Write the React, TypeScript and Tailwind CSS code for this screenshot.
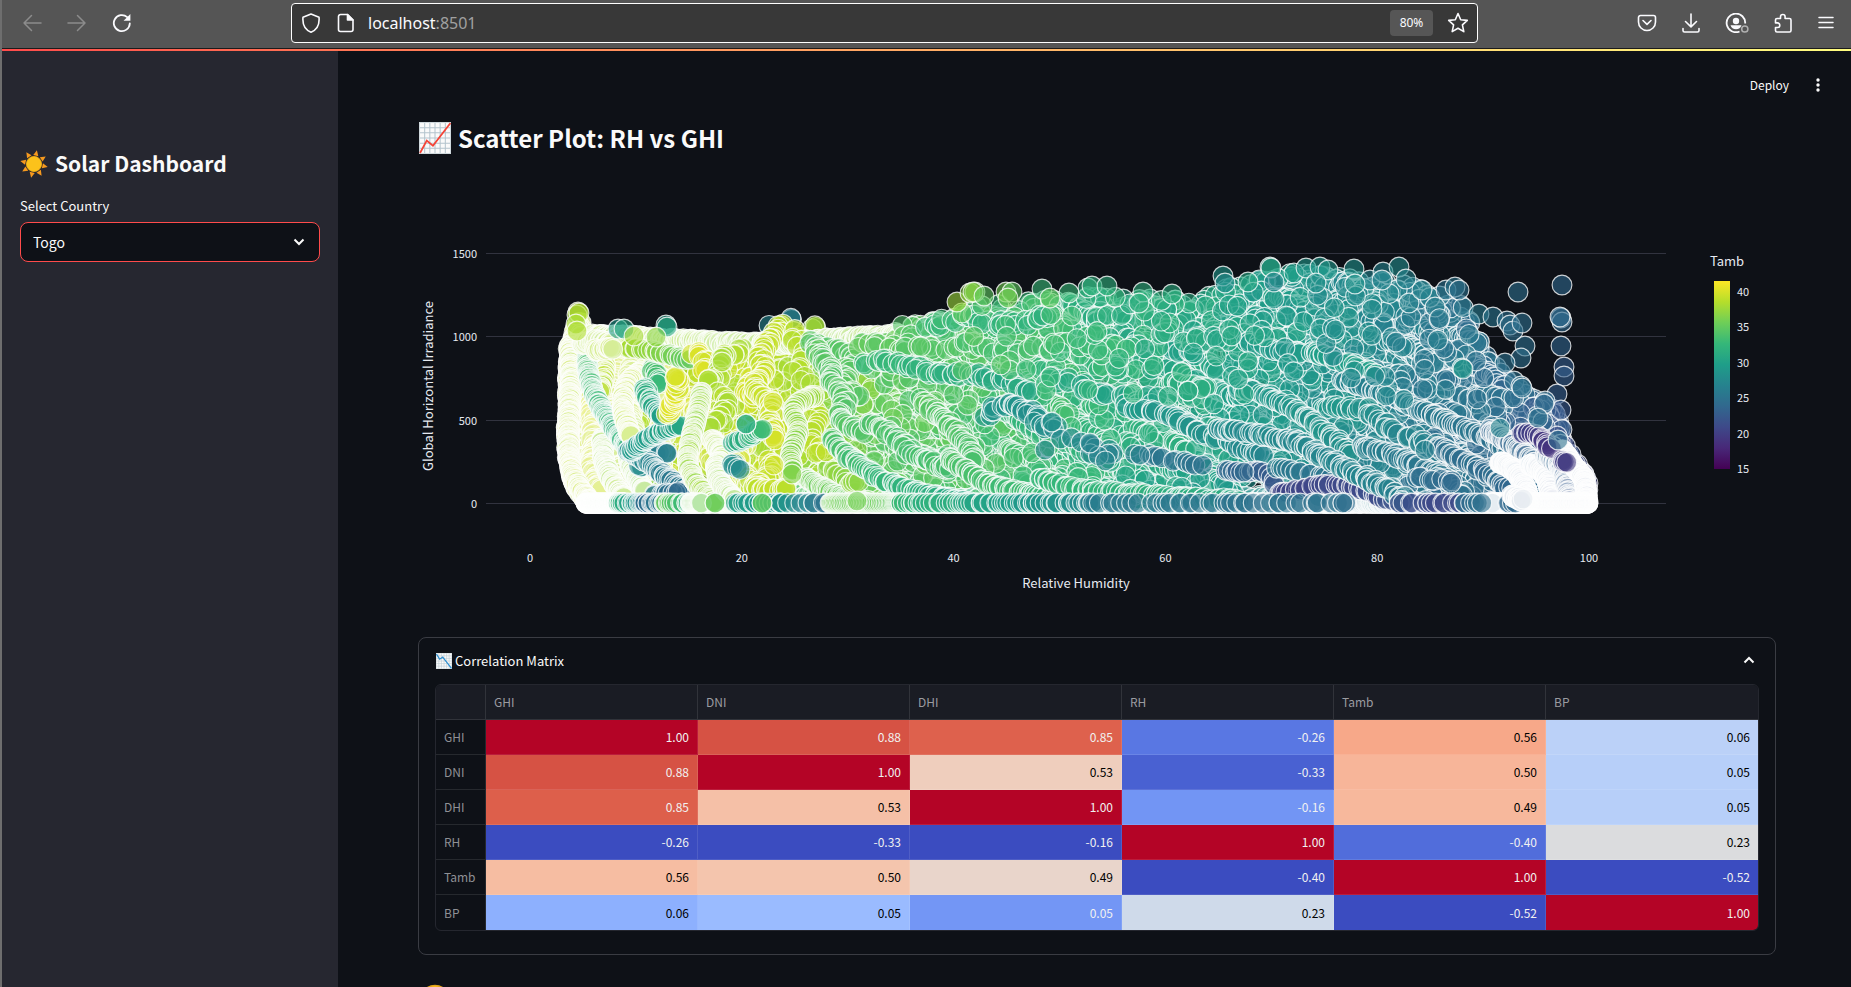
import React from "react";

type Point = [number, number];
type Dot = { x: number; y: number; t: number; pale?: number };

const VIRIDIS = [
  [68, 1, 84],
  [72, 40, 120],
  [62, 73, 137],
  [49, 104, 142],
  [38, 130, 142],
  [31, 158, 137],
  [53, 183, 121],
  [110, 206, 88],
  [181, 222, 43],
  [253, 231, 37],
];

function viridis(t: number, pale = 0): string {
  const p = Math.min(0.9999, Math.max(0, (t - 15) / 26.6)) * 9;
  const i = Math.floor(p);
  const f = p - i;
  const c = VIRIDIS[i].map((v, k) => {
    const base = v + (VIRIDIS[i + 1][k] - v) * f;
    return Math.round(base + (255 - base) * pale);
  });
  return `rgb(${c[0]},${c[1]},${c[2]})`;
}

function seeded(seed: number) {
  let s = seed;
  return () => {
    s = (s + 0x6d2b79f5) | 0;
    let r = Math.imul(s ^ (s >>> 15), 1 | s);
    r = (r + Math.imul(r ^ (r >>> 7), 61 | r)) ^ r;
    return ((r ^ (r >>> 14)) >>> 0) / 4294967296;
  };
}

function lerp(table: Point[], x: number): number {
  for (let i = 1; i < table.length; i++) {
    if (x <= table[i][0]) {
      const [x0, y0] = table[i - 1];
      const [x1, y1] = table[i];
      return y0 + ((y1 - y0) * (x - x0)) / (x1 - x0);
    }
  }
  return table[table.length - 1][1];
}

const CEILING: Point[] = [
  [567, 350], [575, 335], [600, 333], [640, 335], [700, 340], [740, 345], [762, 340], [780, 330], [800, 334],
  [830, 337], [880, 336], [900, 330], [930, 318], [960, 312], [975, 304], [1000, 304], [1040, 300], [1090, 296],
  [1140, 294], [1190, 302], [1220, 288], [1250, 284], [1270, 272], [1320, 272], [1360, 280], [1400, 282],
  [1440, 296], [1460, 304], [1475, 320], [1488, 356], [1500, 370], [1520, 390], [1545, 402], [1558, 415],
  [1565, 440], [1575, 458], [1588, 480],
];

const WARMTH: Point[] = [
  [567, 38.8], [780, 39], [830, 37], [880, 35], [960, 34.4], [1050, 33], [1150, 31.6], [1250, 30.2], [1320, 28.6],
  [1400, 26.6], [1480, 24.8], [1540, 23.5], [1590, 21.5],
];

/* points, step between dots, start and end temperature, jitter */
type Trail = [Point[], number, number, number, number];

const UNDER: Trail[] = [
  [[[767, 325], [769, 327]], 2, 27.5, 27.5, 1],
  [[[790, 320], [793, 317]], 2, 26.5, 27, 1],
  [[[812, 328], [818, 325]], 2, 37.6, 38, 1],
  [[[580, 322], [574, 340], [570, 360], [569, 400], [568, 440], [570, 460], [576, 485], [588, 502]], 0.7, 39, 39, 2.5],
  [[[582, 335], [580, 360], [582, 400], [584, 440], [586, 480], [596, 500]], 0.6, 38, 40, 6],
  [[[600, 345], [602, 400], [600, 450], [606, 490]], 0.6, 39, 38, 5],
  [[[617, 345], [613, 400], [618, 450], [625, 490]], 0.6, 40, 38, 6],
  [[[640, 350], [628, 400], [635, 450], [648, 498]], 0.6, 39, 38, 6],
  [[[660, 370], [665, 420], [655, 460], [670, 495]], 0.8, 40, 38, 8],
  [[[590, 336], [640, 338], [700, 342], [760, 344], [830, 340], [900, 336]], 0.7, 38, 37, 3],
  [[[590, 495], [680, 492], [760, 495], [880, 500], [1100, 500], [1330, 500]], 0.9, 38, 27, 5],
  [[[588, 503], [900, 503], [1250, 503], [1588, 503]], 0.6, 38, 23, 0.5],
  [[[690, 400], [710, 440], [715, 470]], 1, 40, 39, 8],
  [[[745, 440], [735, 465], [760, 490]], 1, 40, 39, 8],
];

const TRAILS: Trail[] = [
  [[[591, 395], [594, 430], [592, 465], [600, 492]], 0.8, 40, 39.4, 4],
  [[[570, 345], [571, 380], [569, 420], [569, 450], [573, 476], [590, 502]], 0.7, 38.6, 39, 1.2],
  [[[601, 348], [605, 370], [600, 392]], 1, 39, 38.5, 1.6],
  [[[602, 438], [604, 460], [612, 480], [624, 498]], 0.7, 37, 38, 1.2],
  [[[588, 345], [588, 372], [597, 400], [611, 424], [628, 448]], 1.2, 34, 32, 1.2],
  [[[640, 372], [627, 385], [623, 410], [630, 435]], 0.8, 39, 38.5, 1.2],
  [[[628, 452], [632, 470], [645, 492]], 0.7, 37, 37, 1.2],
  [[[640, 468], [650, 455], [670, 452]], 2.4, 28, 26, 2],
  [[[628, 450], [648, 462], [664, 475], [690, 492]], 1.6, 28, 25, 1.2],
  [[[655, 495], [680, 492]], 2.4, 26, 24, 1],
  [[[631, 451], [650, 437], [680, 425]], 1.6, 29, 31, 0.8],
  [[[652, 368], [660, 385]], 1.8, 34, 33, 1],
  [[[645, 388], [651, 405], [662, 416]], 1.6, 32, 30, 1],
  [[[668, 415], [674, 402], [678, 388], [675, 375]], 1.8, 40.2, 40.2, 1.5],
  [[[618, 347], [640, 349], [665, 354], [690, 360]], 2.6, 38.6, 35, 1],
  [[[582, 344], [598, 340], [612, 344]], 0.8, 38, 38, 1.5],
  [[[595, 350], [612, 348]], 0.8, 38.4, 38.4, 2],
  [[[695, 352], [706, 362], [700, 372]], 2.2, 40, 40, 3],
  [[[740, 350], [724, 358], [720, 375], [705, 382]], 2, 38.4, 38, 3],
  [[[722, 395], [725, 415], [708, 425]], 2.4, 38.4, 38, 4],
  [[[702, 392], [696, 420], [691, 440], [688, 460], [694, 480], [714, 503]], 1.1, 37.5, 37.5, 1],
  [[[712, 440], [722, 456], [716, 468], [722, 485], [735, 500]], 0.8, 38, 37, 1.2],
  [[[756, 375], [745, 390], [758, 398]], 2.4, 40, 39.6, 3],
  [[[782, 324], [772, 340], [760, 355], [763, 370], [756, 388], [772, 405], [770, 425], [776, 440]], 1.7, 39, 39.7, 2.5],
  [[[790, 330], [800, 350], [796, 370], [812, 385]], 4, 38.8, 38.5, 4],
  [[[808, 395], [815, 415], [812, 440], [822, 455]], 3, 38.6, 39, 4],
  [[[733, 443], [748, 437], [763, 428]], 1.8, 31, 33, 1],
  [[[733, 463], [739, 471]], 2.2, 28, 28, 1],
  [[[770, 462], [772, 475], [755, 488], [790, 490]], 2, 39.4, 39, 3],
  [[[815, 396], [800, 402], [793, 412], [798, 430], [791, 455], [793, 472]], 1.5, 37.6, 36.5, 1],
  [[[806, 478], [820, 486], [840, 496], [868, 503]], 1.4, 36, 35, 1],
  [[[850, 483], [862, 481]], 3, 37.5, 37, 1],
  [[[900, 330], [920, 345], [960, 345], [1010, 350], [1060, 346], [1130, 348]], 5, 34.5, 33, 6],
  [[[812, 342], [835, 350], [850, 360], [845, 385], [860, 398]], 2.4, 34.6, 34.6, 4],
  [[[812, 345], [825, 362], [834, 385], [845, 400], [842, 420], [862, 432]], 1.7, 34.6, 34.2, 3],
  [[[860, 345], [880, 345], [900, 352], [920, 345]], 4, 35, 34.6, 4],
  [[[868, 365], [885, 360], [905, 366], [930, 372], [975, 375], [1010, 382], [1030, 396]], 3.4, 33, 30.6, 4],
  [[[930, 325], [965, 318], [1010, 324], [1050, 318]], 4, 33, 32, 6],
  [[[870, 425], [895, 440], [915, 455], [950, 470]], 2, 34, 33.6, 4],
  [[[833, 438], [842, 452], [860, 465], [880, 478], [910, 490], [950, 499], [985, 503], [1060, 503]], 2, 34, 29, 1.5],
  [[[922, 402], [940, 415], [955, 430], [966, 445], [975, 462]], 1.8, 34.6, 34, 2],
  [[[948, 458], [965, 468], [985, 482], [1020, 492], [1070, 499], [1140, 500]], 1.9, 34, 32, 1.5],
  [[[1040, 478], [1075, 488], [1110, 492], [1190, 498], [1240, 500]], 2.4, 33, 31, 2],
  [[[985, 414], [1005, 406], [1030, 412], [1042, 430]], 2.4, 29, 28, 4],
  [[[1050, 424], [1070, 440], [1090, 443], [1102, 450], [1118, 452]], 6, 28, 26.5, 4],
  [[[1090, 455], [1104, 462]], 5, 27, 27, 2],
  [[[1050, 380], [1090, 386], [1120, 398], [1160, 400]], 4, 31, 30, 6],
  [[[1130, 408], [1170, 415], [1200, 432], [1220, 440]], 3, 29.4, 28.4, 1.5],
  [[[1225, 436], [1240, 448], [1262, 455]], 2.6, 28, 27.4, 1.5],
  [[[1140, 455], [1160, 457], [1180, 462], [1205, 467]], 5.5, 25.6, 25, 1.5],
  [[[1222, 471], [1245, 472], [1262, 472], [1276, 486]], 4, 24, 22, 1],
  [[[1277, 468], [1300, 472], [1330, 478]], 4, 26, 25, 1],
  [[[1276, 493], [1298, 490], [1320, 485], [1350, 486], [1368, 492], [1392, 502]], 3.4, 20.4, 21.4, 1],
  [[[1160, 330], [1200, 345], [1240, 330], [1290, 340]], 6, 31.4, 30, 10],
  [[[1250, 342], [1280, 350], [1310, 352], [1345, 362], [1380, 376]], 3, 29.4, 30, 3],
  [[[1235, 388], [1270, 396], [1300, 412], [1325, 432], [1352, 455]], 2.2, 29.6, 28, 2.5],
  [[[1220, 430], [1290, 440], [1340, 465], [1380, 485], [1405, 500]], 2, 28, 26.5, 3],
  [[[1345, 382], [1380, 392], [1410, 405], [1440, 418], [1470, 430], [1500, 445], [1525, 470], [1545, 498]], 2.1, 27, 24, 1.5],
  [[[1330, 408], [1370, 412], [1390, 428], [1430, 445], [1460, 460]], 3, 29, 26, 4],
  [[[1360, 446], [1400, 458], [1440, 476], [1465, 495]], 2.2, 26.6, 25, 2],
  [[[1440, 447], [1480, 470], [1510, 490]], 2.4, 25, 24, 2],
  [[[1415, 478], [1455, 482]], 4, 25, 24, 2],
  [[[1490, 430], [1520, 450], [1545, 475], [1560, 500]], 0.9, 24, 23, 2],
  [[[1500, 462], [1518, 474], [1530, 502]], 0.5, 24, 22, 1.5],
  [[[1530, 464], [1545, 474], [1552, 500]], 0.5, 24, 22, 1.5],
  [[[1545, 455], [1562, 470], [1570, 502]], 0.8, 24, 22, 1.5],
  [[[1562, 450], [1574, 466], [1584, 480], [1587, 502]], 0.5, 24, 22, 1],
  [[[1523, 434], [1535, 434], [1545, 443], [1552, 450]], 2.4, 20, 19, 0.8],
  [[[1562, 461], [1568, 463]], 1.6, 20, 19, 0.8],
  [[[586, 503], [625, 503]], 0.45, 36, 34, 0],
  [[[618, 503], [640, 503], [645, 503]], 1.6, 33, 27, 0],
  [[[645, 503], [664, 503]], 1.6, 24, 26, 0],
  [[[664, 503], [690, 503]], 1.8, 36, 32, 0],
  [[[690, 503], [702, 503]], 0.8, 36, 36, 0],
  [[[736, 503], [780, 503]], 3, 30, 29, 0],
  [[[780, 503], [800, 503], [830, 503]], 5, 29, 25, 0],
  [[[830, 503], [872, 503], [900, 503]], 1.5, 36, 35, 0],
  [[[900, 503], [950, 503], [1040, 503], [1090, 503]], 3, 33, 27.4, 0],
  [[[1088, 503], [1150, 503], [1250, 503], [1350, 503]], 6, 26, 24.6, 0],
  [[[1588, 503], [1520, 503], [1492, 503]], 0.5, 22, 24, 0],
  [[[1400, 503], [1425, 503], [1462, 503]], 4, 21.8, 20.8, 0],
  [[[1464, 503], [1482, 503]], 3, 24.6, 24.6, 0],
  [[[1508, 503], [1516, 503]], 2, 24, 24, 0],
  [[[1512, 496], [1522, 500]], 0.5, 23, 23, 2],
];

const SINGLES: [number, number, number][] = [
  [578, 312, 38.6], [577, 315, 38], [579, 313, 38.4], [576, 324, 38], [577, 331, 38.4], [618, 329, 29], [624, 329, 31],
  [634, 336, 38], [666, 325, 30], [667, 327, 31], [656, 337, 37], [746, 424, 31.6], [746, 424, 31.6], [722, 358, 38],
  [722, 362, 38], [773, 402, 39.8], [774, 465, 39.8], [792, 474, 36.6], [857, 501, 36], [715, 503, 35.4], [715, 503, 35.4],
  [762, 503, 35], [762, 503, 35], [957, 302, 37.6], [970, 293, 37], [975, 292, 36.6], [973, 292, 36.6], [984, 296, 35],
  [1006, 292, 36], [1012, 292, 35], [1008, 298, 36], [1042, 289, 33], [1050, 298, 35], [1069, 293, 33],
  [1088, 288, 32], [1092, 286, 32], [1107, 286, 32], [1143, 292, 32], [1172, 294, 31.6], [1139, 303, 31.8],
  [1223, 276, 29], [1225, 283, 28], [1248, 282, 31], [1270, 267, 30.6], [1271, 268, 30.4], [1294, 273, 29.6],
  [1306, 268, 29], [1320, 267, 29.4], [1328, 270, 29], [1274, 282, 27], [1316, 283, 28.4], [1354, 269, 28.4],
  [1370, 280, 27], [1355, 284, 28.6], [1383, 272, 27], [1382, 280, 27], [1399, 267, 28], [1406, 279, 27], [1409, 303, 27],
  [1422, 290, 27], [1446, 290, 25], [1455, 287, 25.6], [1459, 290, 25], [1479, 314, 26], [1493, 317, 25.4],
  [1507, 321, 24.8], [1510, 325, 24.8], [1513, 331, 24.8], [1522, 323, 24.8], [1525, 346, 24.8], [1521, 358, 24.8],
  [1505, 363, 25], [1518, 292, 24.8], [1562, 285, 24], [1561, 318, 24], [1562, 322, 24], [1560, 317, 24.2],
  [1561, 346, 23.6], [1564, 367, 23], [1564, 376, 23], [1557, 394, 23], [1561, 410, 22.4], [1514, 381, 25],
  [1521, 386, 25], [1522, 388, 25], [1545, 401, 24.6], [1544, 404, 24], [1462, 368, 28.4], [1463, 369, 28.6],
  [1538, 418, 25], [1558, 440, 25], [1500, 428, 27], [1188, 391, 31.2], [1188, 391, 31.2], [1045, 450, 27], [1090, 443, 27],
  [1140, 455, 26], [1244, 472, 24.2], [1425, 450, 26.6], [1351, 378, 27.6], [1052, 422, 28.4],
];

function curve(points: Point[], step: number): Point[] {
  const out: Point[] = [];
  for (let i = 0; i < points.length - 1; i++) {
    const p0 = points[Math.max(0, i - 1)];
    const p1 = points[i];
    const p2 = points[i + 1];
    const p3 = points[Math.min(points.length - 1, i + 2)];
    const n = Math.max(1, Math.round(Math.hypot(p2[0] - p1[0], p2[1] - p1[1]) / step));
    for (let k = 0; k < n; k++) {
      const u = k / n;
      const at = (a: number) =>
        0.5 *
        (2 * p1[a] +
          (p2[a] - p0[a]) * u +
          (2 * p0[a] - 5 * p1[a] + 4 * p2[a] - p3[a]) * u * u +
          (3 * p1[a] - p0[a] - 3 * p2[a] + p3[a]) * u * u * u);
      out.push([at(0), at(1)]);
    }
  }
  return out;
}

function buildDots(): Dot[] {
  const rand = seeded(8501);
  const dots: Dot[] = [];
  const run = ([points, step, t0, t1, jitter]: Trail) => {
    const line = curve(points, step);
    const wobble = step > 1.5 ? step * 1.7 : 0.3;
    /* tightly packed readings wash out towards white */
    const pale = step <= 0.5 ? 0.88 : step <= 0.8 ? 0.5 : step <= 1.2 ? 0.15 : 0;
    line.forEach(([x, y], i) => {
      dots.push({
        x: x + (rand() - 0.5) * (jitter * 1.4 + wobble),
        y: Math.min(503.5, y + (rand() - 0.5) * jitter * 1.6),
        t: t0 + ((t1 - t0) * i) / line.length + (rand() - 0.5) * 0.8,
        pale,
      });
    });
  };
  const fill = (count: number, from: number, to: number) => {
    for (let i = 0; i < count; i++) {
      const x = from + rand() * (to - from);
      const top = lerp(CEILING, x);
      const y = top + rand() * (503 - top);
      if (x < 567 + Math.max(0, y - 450) * 0.42) continue;
      const low = (y - 400) / 100;
      const cool = x > 1100 && low > 0 ? low * 1.2 : 0;
      dots.push({ x, y, t: lerp(WARMTH, x) - cool + (rand() - 0.5) * 2 });
    }
  };
  fill(1100, 567, 830);
  fill(3300, 820, 1588);
  UNDER.forEach(run);
  /* short drifting streaks through the humid half */
  for (let i = 0; i < 170; i++) {
    const x = 830 + rand() * 650;
    const top = lerp(CEILING, x) + 4;
    const y = top + rand() * (480 - top);
    const len = 14 + rand() * 30;
    const dy = (0.1 + rand() * 0.8) * len;
    const t = lerp(WARMTH, x) + (rand() - 0.5) * 1.8;
    const yEnd = Math.min(500, Math.max(y + dy, lerp(CEILING, x + len)));
    run([[[x, y], [x + len / 2, y + (yEnd - y) * 0.4], [x + len, yEnd]], 1.8 + rand() * 3, t, t - 0.8, 2]);
  }
  fill(420, 860, 1500);
  TRAILS.forEach(run);
  for (let i = 0; i < 90; i++) {
    const x = 960 + rand() * 500;
    const top = lerp(CEILING, x);
    const y = top + rand() * (400 - top);
    dots.push({ x, y, t: lerp(WARMTH, x) + (rand() - 0.5) * 1.6 });
  }
  SINGLES.forEach(([x, y, t]) => dots.push({ x, y, t }));
  return dots;
}

const DOTS = buildDots();

const X_TICKS = [0, 20, 40, 60, 80, 100];
const Y_TICKS = [0, 500, 1000, 1500];
const TEMP_TICKS = [15, 20, 25, 30, 35, 40];

function ScatterPlot() {
  return (
    <svg
      viewBox="418 180 1358 430"
      className="block h-auto w-full"
      role="img"
      aria-label="Relative Humidity against Global Horizontal Irradiance"
    >
      <defs>
        <linearGradient id="tamb" x1="0" y1="1" x2="0" y2="0">
          {VIRIDIS.map((c, i) => (
            <stop key={i} offset={i / 9} stopColor={`rgb(${c[0]},${c[1]},${c[2]})`} />
          ))}
        </linearGradient>
      </defs>
      {Y_TICKS.map((v) => {
        const y = Math.round(503 - v / 6) + 0.5;
        return (
          <g key={v}>
            <line x1="486" x2="1666" y1={y} y2={y} stroke="#31333f" />
            <text x="477" y={y + 4} textAnchor="end" fontSize="11" fill="#e6eaf1">
              {v}
            </text>
          </g>
        );
      })}
      {X_TICKS.map((v) => (
        <text key={v} x={530 + v * 10.59} y="562" textAnchor="middle" fontSize="11" fill="#e6eaf1">
          {v}
        </text>
      ))}
      <text x="1076" y="588" textAnchor="middle" fontSize="13" fill="#e6eaf1">
        Relative Humidity
      </text>
      <text x="433" y="386" textAnchor="middle" fontSize="13" fill="#e6eaf1" transform="rotate(-90 433 386)">
        Global Horizontal Irradiance
      </text>
      <g stroke="#fff" strokeWidth="1.15" strokeOpacity="0.78" fillOpacity="0.6">
        {DOTS.map((d, i) => (
          <circle key={i} cx={d.x.toFixed(1)} cy={d.y.toFixed(1)} r="9.9" fill={viridis(d.t, d.pale)} />
        ))}
      </g>
      <text x="1710" y="266" fontSize="13" fill="#e6eaf1">
        Tamb
      </text>
      <rect x="1714" y="281" width="16" height="188" fill="url(#tamb)" />
      {TEMP_TICKS.map((v) => (
        <text key={v} x="1737" y={473 - (v - 15) * 7.08} fontSize="11" fill="#e6eaf1">
          {v}
        </text>
      ))}
    </svg>
  );
}

const COLUMNS = ["GHI", "DNI", "DHI", "RH", "Tamb", "BP"];

type Cell = { value: string; tone: string };

const RED = "bg-[#b40426] text-[#f1f1f1]";
const NAVY = "bg-[#3b4cc0] text-[#f1f1f1]";

const ROWS: { name: string; cells: Cell[] }[] = [
  {
    name: "GHI",
    cells: [
      { value: "1.00", tone: RED },
      { value: "0.88", tone: "bg-[#d65244] text-[#f1f1f1]" },
      { value: "0.85", tone: "bg-[#de614d] text-[#f1f1f1]" },
      { value: "-0.26", tone: "bg-[#5977e3] text-[#f1f1f1]" },
      { value: "0.56", tone: "bg-[#f7a889] text-black" },
      { value: "0.06", tone: "bg-[#bbd1f8] text-black" },
    ],
  },
  {
    name: "DNI",
    cells: [
      { value: "0.88", tone: "bg-[#d65244] text-[#f1f1f1]" },
      { value: "1.00", tone: RED },
      { value: "0.53", tone: "bg-[#efcebd] text-black" },
      { value: "-0.33", tone: "bg-[#4961d2] text-[#f1f1f1]" },
      { value: "0.50", tone: "bg-[#f7b599] text-black" },
      { value: "0.05", tone: "bg-[#b7cff9] text-black" },
    ],
  },
  {
    name: "DHI",
    cells: [
      { value: "0.85", tone: "bg-[#dd5f4b] text-[#f1f1f1]" },
      { value: "0.53", tone: "bg-[#f5c0a7] text-black" },
      { value: "1.00", tone: RED },
      { value: "-0.16", tone: "bg-[#7295f4] text-[#f1f1f1]" },
      { value: "0.49", tone: "bg-[#f7b89c] text-black" },
      { value: "0.05", tone: "bg-[#b7cff9] text-black" },
    ],
  },
  {
    name: "RH",
    cells: [
      { value: "-0.26", tone: NAVY },
      { value: "-0.33", tone: NAVY },
      { value: "-0.16", tone: NAVY },
      { value: "1.00", tone: RED },
      { value: "-0.40", tone: "bg-[#516ddb] text-[#f1f1f1]" },
      { value: "0.23", tone: "bg-[#dbdcde] text-black" },
    ],
  },
  {
    name: "Tamb",
    cells: [
      { value: "0.56", tone: "bg-[#f6bda2] text-black" },
      { value: "0.50", tone: "bg-[#f4c5ad] text-black" },
      { value: "0.49", tone: "bg-[#e9d5cb] text-black" },
      { value: "-0.40", tone: NAVY },
      { value: "1.00", tone: RED },
      { value: "-0.52", tone: NAVY },
    ],
  },
  {
    name: "BP",
    cells: [
      { value: "0.06", tone: "bg-[#8db0fe] text-black" },
      { value: "0.05", tone: "bg-[#9abbff] text-black" },
      { value: "0.05", tone: "bg-[#7396f5] text-[#f1f1f1]" },
      { value: "0.23", tone: "bg-[#cfdaea] text-black" },
      { value: "-0.52", tone: NAVY },
      { value: "1.00", tone: RED },
    ],
  },
];

function CorrelationTable() {
  return (
    <div className="overflow-hidden rounded-md border border-[#25272f]">
      <table className="w-full table-fixed border-separate border-spacing-0 text-xs">
        <colgroup>
          <col className="w-[50px]" />
          {COLUMNS.map((c) => (
            <col key={c} />
          ))}
        </colgroup>
        <thead>
          <tr className="h-[35px] bg-[#1a1c24] text-left text-[#9a9ba0]">
            <td className="border-r border-b border-white/10" />
            {COLUMNS.map((c) => (
              <th key={c} scope="col" className="border-r border-b border-white/10 px-2 font-normal last:border-r-0">
                {c}
              </th>
            ))}
          </tr>
        </thead>
        <tbody>
          {ROWS.map((row) => (
            <tr key={row.name} className="group h-[35px]">
              <th
                scope="row"
                className="border-r border-b border-white/10 pl-2 text-left font-normal text-[#8f9095] group-last:border-b-0"
              >
                {row.name}
              </th>
              {row.cells.map((cell, i) => (
                <td
                  key={i}
                  className={`border-r border-b border-white/10 px-2 text-right last:border-r-0 group-last:border-b-0 ${cell.tone}`}
                >
                  {cell.value}
                </td>
              ))}
            </tr>
          ))}
        </tbody>
      </table>
    </div>
  );
}

function ChartEmoji({ down = false, className }: { down?: boolean; className: string }) {
  const lines = [5, 10, 15, 20, 25];
  return (
    <svg viewBox="0 0 31 31" className={className} aria-hidden="true" preserveAspectRatio="none">
      <rect width="31" height="31" fill="#fafafa" />
      <g stroke="#b4c4cd" strokeWidth="1">
        {lines.map((n) => (
          <path key={n} d={`M${n + 0.5} 0V31M0 ${n + 0.5}H31`} />
        ))}
      </g>
      <rect x="0.5" y="0.5" width="30" height="30" fill="none" stroke="#cfd8dc" />
      {down ? (
        <path d="M1 2L7 12L13 8L30 30" fill="none" stroke="#2f8fd0" strokeWidth="2.4" />
      ) : (
        <path d="M1 30L7.5 18L13.5 23L30.5 1" fill="none" stroke="#f44336" strokeWidth="1.7" />
      )}
    </svg>
  );
}

function SunEmoji() {
  const rays = [0, 45, 90, 135, 180, 225, 270, 315];
  return (
    <svg viewBox="0 0 28 28" className="size-7 shrink-0" aria-hidden="true">
      <g fill="#f79a1e" transform="rotate(12 14 14)">
        {rays.map((r) => (
          <path key={r} d="M11.4 5.4L14 0L16.6 5.4Z" transform={`rotate(${r} 14 14)`} />
        ))}
      </g>
      <circle cx="14" cy="14" r="7.6" fill="#fcc21b" stroke="#f9b013" strokeWidth="0.8" />
    </svg>
  );
}

function BrowserBar() {
  const iconButton = "flex items-center justify-center";
  return (
    <div className="flex h-12 shrink-0 items-center bg-[#555555] pr-4 pb-0.5 pl-5 text-[#fbfbfe]">
      <div className="flex w-[269px] shrink-0 items-center gap-[25px]">
        <button type="button" aria-label="Back" className={iconButton}>
          <svg viewBox="0 0 20 20" className="size-5 fill-none stroke-[#8c8c8c] stroke-[1.5]">
            <path d="M19 10H2M9.5 2.5L2 10L9.5 17.5" strokeLinecap="round" strokeLinejoin="round" />
          </svg>
        </button>
        <button type="button" aria-label="Forward" className={iconButton}>
          <svg viewBox="0 0 20 20" className="size-5 fill-none stroke-[#8c8c8c] stroke-[1.5]">
            <path d="M1 10H18M10.5 2.5L18 10L10.5 17.5" strokeLinecap="round" strokeLinejoin="round" />
          </svg>
        </button>
        <button type="button" aria-label="Reload" className={iconButton}>
          <svg viewBox="0 0 20 20" className="size-5 fill-none stroke-current">
            <path d="M17.8 10.5A8 8 0 1 1 15.2 4.2" strokeWidth="1.8" strokeLinecap="round" />
            <path d="M18.4 1V7.8H11.6Z" fill="currentColor" stroke="none" />
          </svg>
        </button>
      </div>
      <div className="flex h-10 min-w-0 flex-1 items-center rounded border border-white bg-[#383838] pr-2 pl-[9px]">
        <button type="button" aria-label="Tracking protection" className={iconButton}>
          <svg viewBox="0 0 20 20" className="size-5 fill-none stroke-current stroke-[1.6]">
            <path d="M10 1L18 4.2C18.6 10.5 16.5 16.6 10 19.2C3.5 16.6 1.4 10.5 2 4.2Z" strokeLinejoin="round" />
          </svg>
        </button>
        <button type="button" aria-label="Site information" className={`${iconButton} ml-[15px]`}>
          <svg viewBox="0 0 20 20" className="size-5 fill-none stroke-current stroke-[1.6]">
            <path
              d="M4.5 1.5H11.5L17 7V16.5A2 2 0 0 1 15 18.5H4.5A2 2 0 0 1 2.5 16.5V3.5A2 2 0 0 1 4.5 1.5Z"
              strokeLinejoin="round"
            />
            <path d="M11.5 1.5V7H17Z" fill="currentColor" strokeLinejoin="round" />
          </svg>
        </button>
        <div className="ml-3 flex-1 font-['Noto_Sans',sans-serif] text-base">
          localhost<span className="text-[#a0a0a0]">:8501</span>
        </div>
        <button
          type="button"
          className="h-[26px] w-[43px] rounded bg-[#565656] font-['Noto_Sans',sans-serif] text-xs"
        >
          80%
        </button>
        <button type="button" aria-label="Bookmark this page" className={`${iconButton} ml-[14px]`}>
          <svg viewBox="0 0 22 22" className="size-[22px] fill-none stroke-current stroke-[1.6]">
            <path
              d="M11 1.5L13.7 7.7L20.3 8.4L15.4 12.9L16.8 19.6L11 16.2L5.2 19.6L6.6 12.9L1.7 8.4L8.3 7.7Z"
              strokeLinejoin="round"
            />
          </svg>
        </button>
      </div>
      <div className="ml-[159px] flex shrink-0 items-center gap-6">
        <button type="button" aria-label="Save to Pocket" className={iconButton}>
          <svg viewBox="0 0 20 20" className="size-5 fill-none stroke-current stroke-[1.6]">
            <path d="M3.5 2.5H16.5A2 2 0 0 1 18.5 4.5V9A8.5 8.5 0 0 1 1.5 9V4.5A2 2 0 0 1 3.5 2.5Z" />
            <path d="M6 7.5L10 11.3L14 7.5" strokeLinecap="round" strokeLinejoin="round" />
          </svg>
        </button>
        <button type="button" aria-label="Downloads" className={iconButton}>
          <svg viewBox="0 0 20 20" className="size-5 fill-none stroke-current stroke-[1.6]">
            <path
              d="M10 1V13.5M4.5 8.5L10 13.8L15.5 8.5M2 15.5V17.5Q2 19 3.5 19H16.5Q18 19 18 17.5V15.5"
              strokeLinecap="round"
              strokeLinejoin="round"
            />
          </svg>
        </button>
        <button type="button" aria-label="Account" className={iconButton}>
          <svg viewBox="0 0 24 20" className="h-5 w-6 fill-none stroke-current">
            <path d="M20.2 10.5A9.3 9.3 0 1 0 14.5 18.5" strokeWidth="1.8" />
            <circle cx="11" cy="8" r="3.2" fill="currentColor" stroke="none" />
            <path d="M5.5 12.3H16.5Q15.2 16.2 11 16.2T5.5 12.3Z" fill="currentColor" stroke="none" />
            <circle cx="19.8" cy="16" r="3.1" stroke="#b0b0b0" strokeWidth="1.5" />
          </svg>
        </button>
        <button type="button" aria-label="Extensions" className={iconButton}>
          <svg viewBox="0 0 20 20" className="size-5 fill-none stroke-current stroke-[1.6]">
            <path
              d="M7.5 5.5V3.8A2.3 2.3 0 0 1 12.1 3.8V5.5H16.5A1.5 1.5 0 0 1 18 7V17.5A1.5 1.5 0 0 1 16.5 19H4A1.5 1.5 0 0 1 2.5 17.5V14.5H4.5A2.3 2.3 0 0 0 4.5 9.9H2.5V7A1.5 1.5 0 0 1 4 5.5Z"
              strokeLinejoin="round"
            />
          </svg>
        </button>
        <button type="button" aria-label="Menu" className={iconButton}>
          <svg viewBox="0 0 18 20" className="h-5 w-[18px] fill-none stroke-current stroke-[1.5]">
            <path d="M2 4.5H16M2 9.5H16M2 14.5H16" strokeLinecap="round" />
          </svg>
        </button>
      </div>
    </div>
  );
}

export default function App() {
  return (
    <div className="flex h-screen flex-col overflow-hidden border-l-2 border-[#6e6e6e] bg-[#0e1117] font-['Noto_Sans_CJK_SC','Noto_Sans',sans-serif] text-[#fafafa]">
      <BrowserBar />
      <div className="h-[3px] shrink-0 border-t border-[#1b1b1b] bg-linear-to-r from-[#ff4b4b] to-[#fffd80]" />
      <div className="flex min-h-0 flex-1">
        <aside className="w-[336px] shrink-0 bg-[#262730] px-[18px] pt-[93px]">
          <h1 className="flex h-10 items-center gap-[7px] text-[21px] font-semibold">
            <SunEmoji />
            Solar Dashboard
          </h1>
          <label htmlFor="country" className="mt-3 block text-[13px] leading-5">
            Select Country
          </label>
          <div className="relative mt-[6px]">
            <select
              id="country"
              className="block h-10 w-full appearance-none rounded-lg border border-[#ff4b4b] bg-[#0e1117] px-3 text-sm outline-none"
            >
              <option>Togo</option>
            </select>
            <svg
              viewBox="0 0 12 12"
              aria-hidden="true"
              className="pointer-events-none absolute top-[14px] right-[15px] size-3 fill-none stroke-current stroke-2"
            >
              <path d="M1.5 3.5L6 8L10.5 3.5" />
            </svg>
          </div>
        </aside>
        <main className="min-w-0 flex-1">
          <div className="flex h-[68px] items-center justify-end gap-[25px] pr-[29px]">
            <button type="button" className="text-xs">
              Deploy
            </button>
            <button type="button" aria-label="Main menu">
              <svg viewBox="0 0 8 16" className="h-4 w-2 fill-current">
                <circle cx="4" cy="3" r="1.7" />
                <circle cx="4" cy="8" r="1.7" />
                <circle cx="4" cy="13" r="1.7" />
              </svg>
            </button>
          </div>
          <div className="pr-[75px] pl-20">
            <h2 className="flex h-[38px] items-center gap-[7px] pl-px text-2xl font-semibold">
              <ChartEmoji className="size-8" />
              Scatter Plot: RH vs GHI
            </h2>
            <div className="mt-[23px]">
              <ScatterPlot />
            </div>
            <details open className="mt-[27px] rounded-lg border border-[#3a3c43] px-4 pb-[23px]">
              <summary className="flex h-[46px] cursor-pointer list-none items-center text-[13px]">
                <ChartEmoji down className="mr-[3px] ml-px h-4 w-4" />
                Correlation Matrix
                <svg
                  viewBox="0 0 12 12"
                  aria-hidden="true"
                  className="mr-1 ml-auto size-3 fill-none stroke-current stroke-2"
                >
                  <path d="M1.5 7.5L6 3L10.5 7.5" />
                </svg>
              </summary>
              <CorrelationTable />
            </details>
            <div className="mt-[29px] pl-px">
              <svg viewBox="0 0 32 32" className="size-8" aria-hidden="true">
                <circle cx="16" cy="16" r="14.5" fill="#fcc21b" stroke="#e0a31b" strokeWidth="1.5" />
              </svg>
            </div>
          </div>
        </main>
      </div>
    </div>
  );
}
